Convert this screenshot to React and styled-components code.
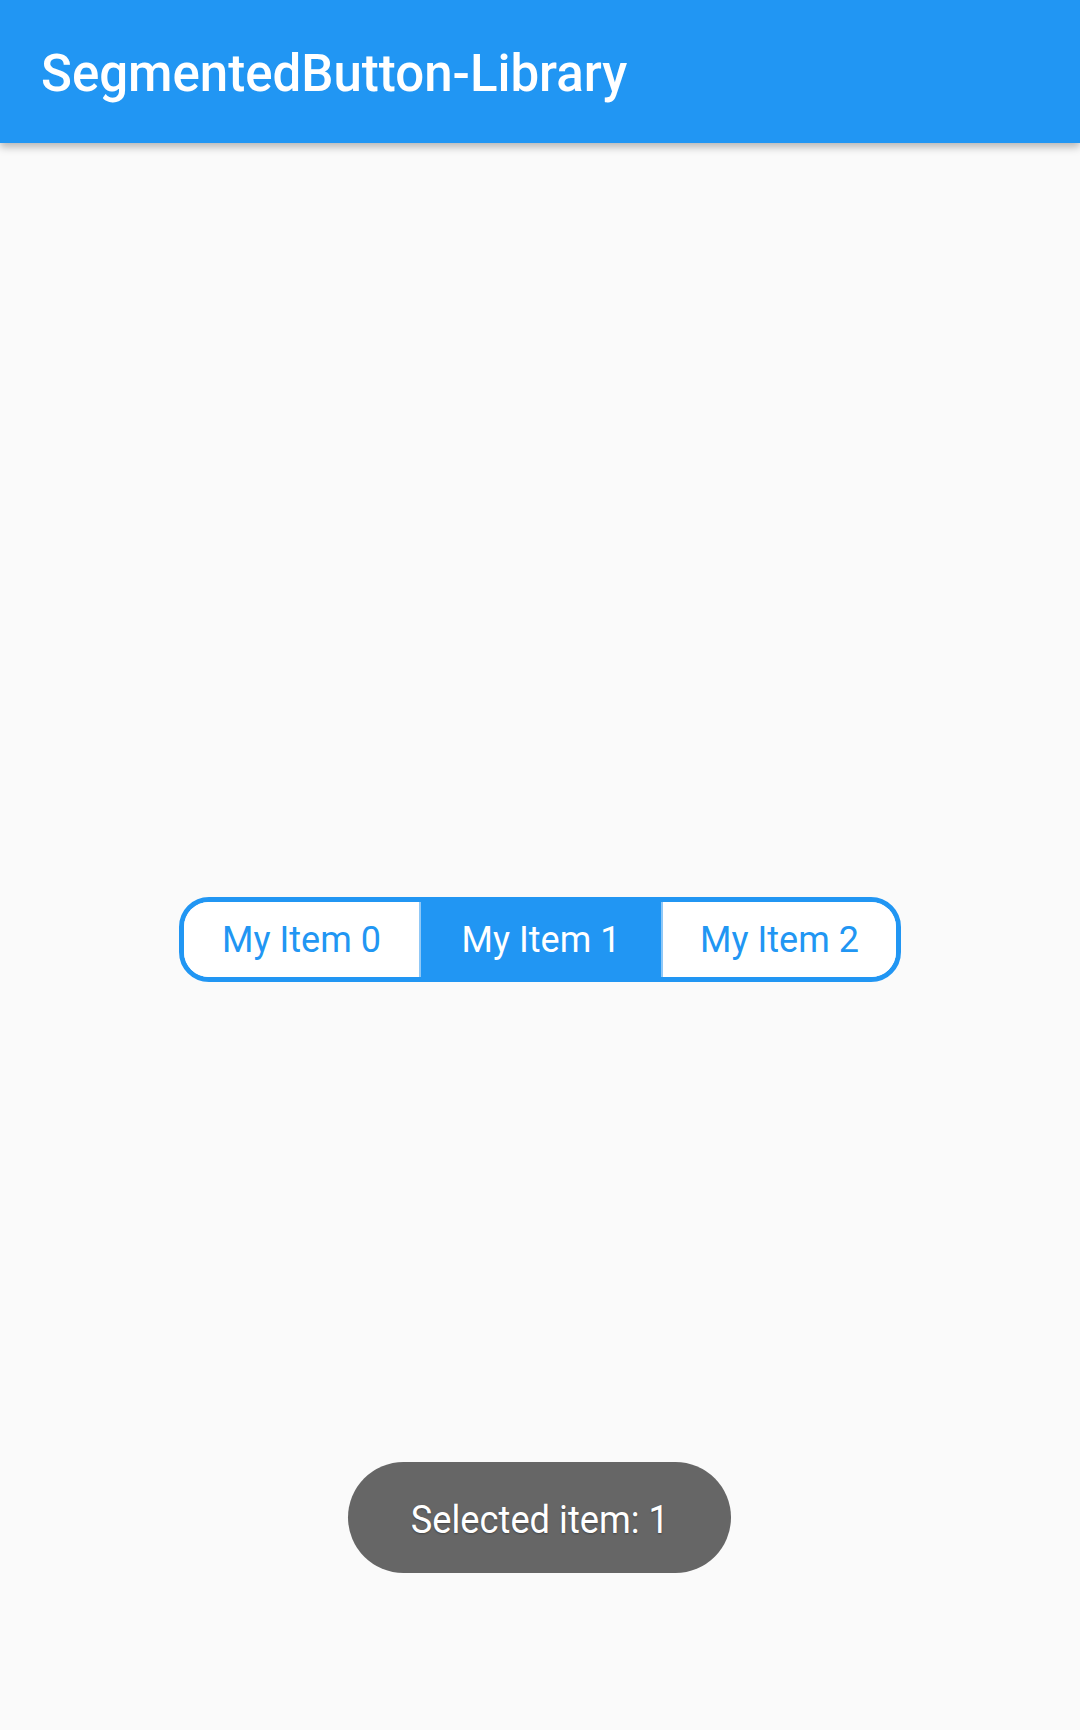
import React, { useState } from "react";
import styled, { createGlobalStyle } from "styled-components";

const GlobalStyle = createGlobalStyle`
    html, body {
        margin: 0;
        padding: 0;
        background: #fafafa;
        font-family: Roboto, "Noto Sans", sans-serif;
    }
`;

const Screen = styled.div`
    position: relative;
    width: 1080px;
    height: 1730px;
    display: flex;
    flex-direction: column;
    background: #fafafa;
    overflow: hidden;
`;

const AppBar = styled.header`
    height: 143px;
    flex: none;
    display: flex;
    align-items: center;
    padding-left: 41px;
    background: #2196f3;
    box-shadow: 0 4px 8px rgba(0, 0, 0, 0.28);
    z-index: 1;
`;

const Title = styled.h1`
    margin: 0;
    margin-top: 3px;
    color: #ffffff;
    font-size: 51px;
    font-weight: 500;
    letter-spacing: 0;
`;

const Body = styled.main`
    flex: 1;
    display: flex;
    align-items: center;
    justify-content: center;
    padding-top: 6px;
`;

const Segments = styled.div`
    display: flex;
    height: 85px;
    border: 5px solid #2196f3;
    border-radius: 30px;
    overflow: hidden;
    box-sizing: border-box;
    background: #ffffff;
`;

const Segment = styled.button`
    width: ${props => props.width}px;
    height: 100%;
    border: none;
    border-left: ${props => (props.first ? "none" : "2px solid #8fc8f7")};
    padding: 0;
    margin: 0;
    font-family: Roboto, "Noto Sans", sans-serif;
    font-size: 36px;
    font-weight: 400;
    color: ${props => (props.active ? "#ffffff" : "#2196f3")};
    background: ${props => (props.active ? "#2196f3" : "#ffffff")};
    cursor: pointer;
`;

const Toast = styled.div`
    position: absolute;
    left: 348px;
    top: 1462px;
    width: 383px;
    height: 111px;
    border-radius: 56px;
    background: #666666;
    display: flex;
    align-items: center;
    justify-content: center;
`;

const ToastText = styled.span`
    color: #ffffff;
    font-size: 39px;
    font-weight: 400;
    display: inline-block;
    transform: scaleX(0.93);
    text-shadow: 0 1px 2px rgba(0, 0, 0, 0.35);
    margin-top: 4px;
`;

const items = ["My Item 0", "My Item 1", "My Item 2"];
const widths = [235, 242, 235];

const App = () => {
    const [selected, setSelected] = useState(1);
    return (
        <Screen>
            <GlobalStyle />
            <AppBar>
                <Title>SegmentedButton-Library</Title>
            </AppBar>
            <Body>
                <Segments>
                    {items.map((item, i) => (
                        <Segment
                            key={item}
                            first={i === 0}
                            active={selected === i}
                            width={widths[i]}
                            onClick={() => setSelected(i)}
                        >
                            {item}
                        </Segment>
                    ))}
                </Segments>
            </Body>
            <Toast>
                <ToastText>Selected item: {selected}</ToastText>
            </Toast>
        </Screen>
    );
};

export default App;
